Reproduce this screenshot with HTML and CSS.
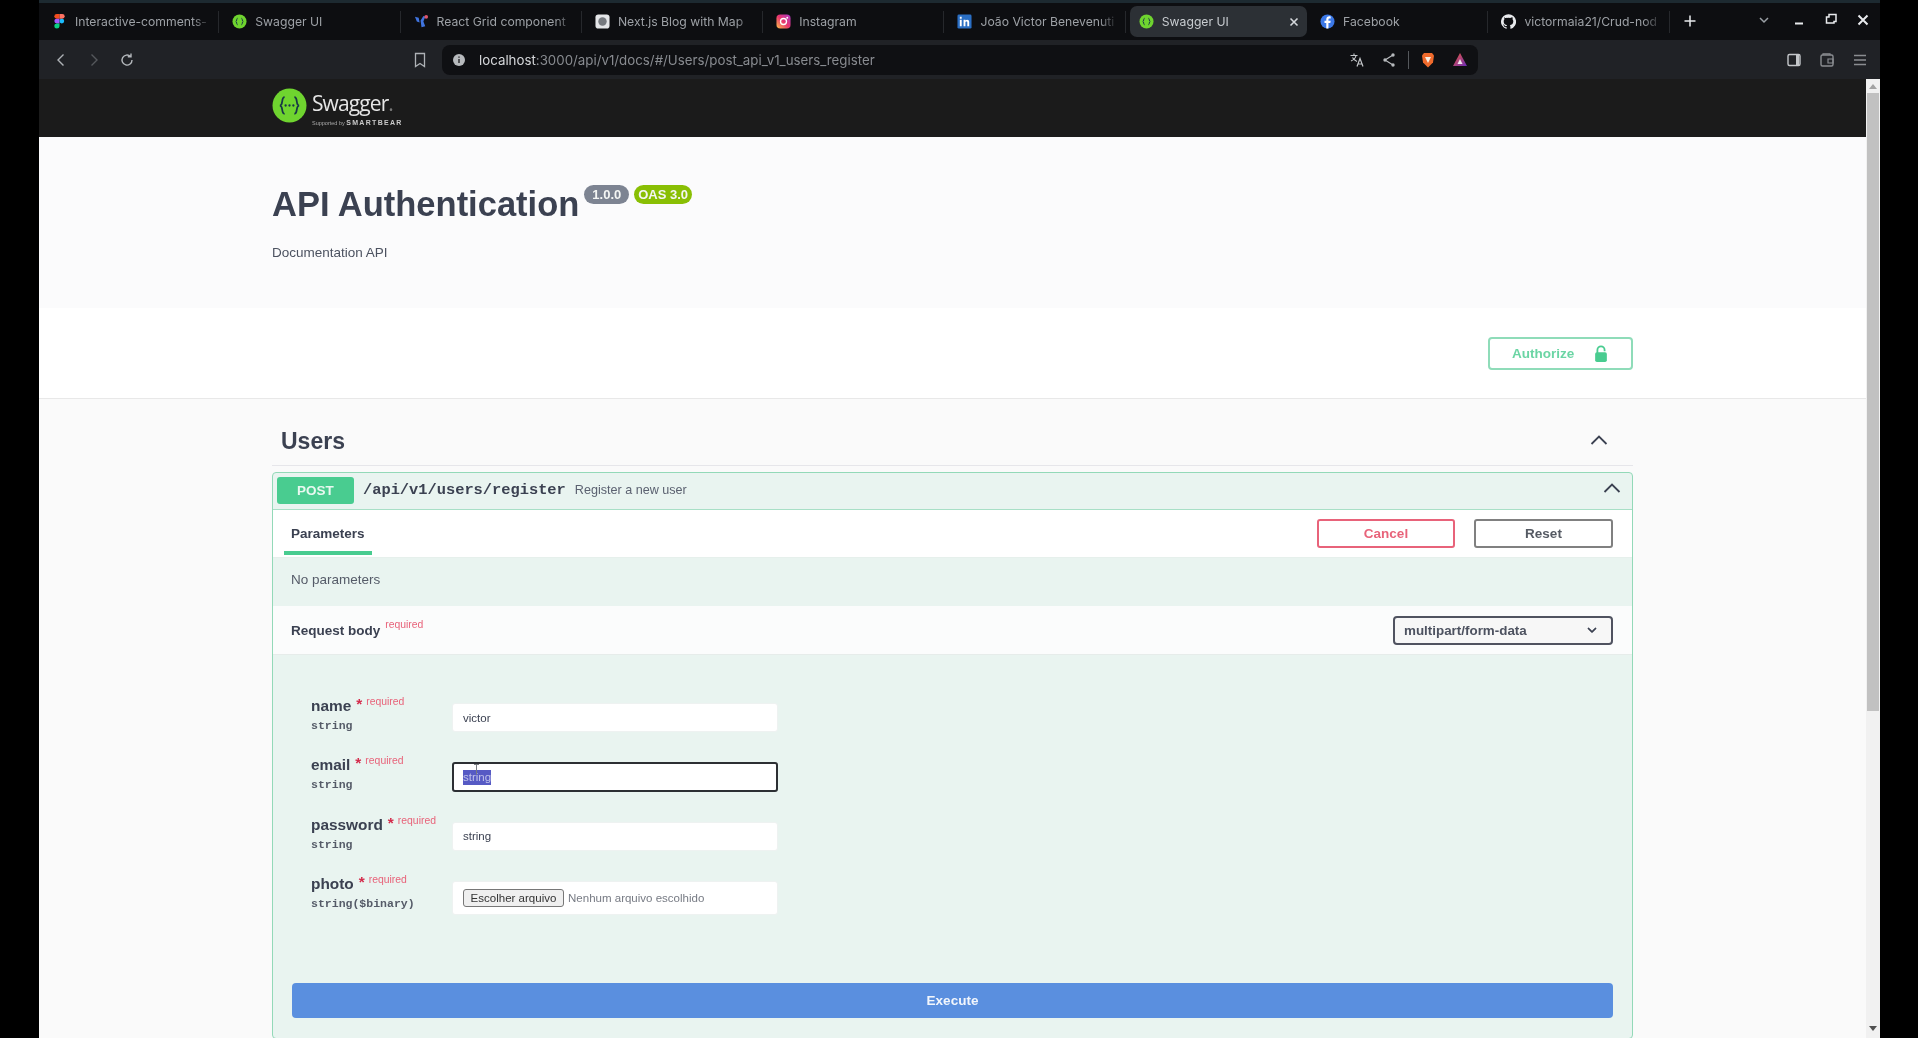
FILE: index.html
```html
<!DOCTYPE html>
<html>
<head>
<meta charset="utf-8">
<title>Swagger UI</title>
<link rel="stylesheet" href="styles.css">
</head>
<body>
<div class="window">

  <div class="tabbar">
    <div class="tab">
      <svg class="fav" viewBox="0 0 16 16"><path fill="#f24e1e" d="M5 0h3v5H5a2.5 2.5 0 0 1 0-5z"/><path fill="#ff7262" d="M8 0h3a2.5 2.5 0 0 1 0 5H8z"/><path fill="#a259ff" d="M5 5h3v5H5a2.5 2.5 0 0 1 0-5z"/><circle fill="#1abcfe" cx="10.5" cy="7.5" r="2.5"/><path fill="#0acf83" d="M5 10h3v3a2.8 2.8 0 1 1-3-3z"/></svg>
      <span class="title">Interactive-comments-</span>
    </div>
    <div class="tab">
      <svg class="fav" viewBox="0 0 16 16"><circle cx="8" cy="8" r="7.5" fill="#6fd42f"/><path d="M6 4.500C4.500 4.500 5.500 8 4 8c1.500 0 .5 3.500 2 3.500M10 4.500C11.500 4.500 10.500 8 12 8c-1.500 0-.5 3.500-2 3.500" fill="none" stroke="#173647" stroke-width="1"/></svg>
      <span class="title">Swagger UI</span>
    </div>
    <div class="tab">
      <svg class="fav" viewBox="0 0 16 16"><path d="M1 3l4 1 1 5-3-1zM7 7l3-5 2 1-2 5 2 5-4 1z" fill="#3f74e0"/><circle cx="13" cy="3" r="2" fill="#e0556b"/></svg>
      <span class="title">React Grid component</span>
    </div>
    <div class="tab">
      <svg class="fav" viewBox="0 0 16 16"><rect x=".5" y=".5" width="15" height="15" rx="3" fill="#e4e6e8"/><circle cx="8" cy="8" r="4.500" fill="#75797e"/></svg>
      <span class="title">Next.js Blog with Map</span>
    </div>
    <div class="tab">
      <svg class="fav" viewBox="0 0 16 16"><defs><linearGradient id="ig" x1="0" y1="1" x2="1" y2="0"><stop offset="0" stop-color="#fdc14a"/><stop offset=".5" stop-color="#e8336d"/><stop offset="1" stop-color="#a83cc8"/></linearGradient></defs><rect x=".5" y=".5" width="15" height="15" rx="4" fill="url(#ig)"/><circle cx="8" cy="8" r="3.200" fill="none" stroke="#fff" stroke-width="1.400"/><circle cx="12" cy="4" r="1" fill="#fff"/></svg>
      <span class="title">Instagram</span>
    </div>
    <div class="tab">
      <svg class="fav" viewBox="0 0 16 16"><rect x=".5" y=".5" width="15" height="15" rx="1.500" fill="#2a6fc4"/><path d="M3 6h2v7H3zM3 3h2v2H3zM7 6h2v1c1-1.500 4-1.500 4 1.500V13h-2V9c0-1.500-2-1.500-2 0v4H7z" fill="#fff"/></svg>
      <span class="title">João Victor Benevenuti</span>
    </div>
    <div class="tab active">
      <svg class="fav" viewBox="0 0 16 16"><circle cx="8" cy="8" r="7.500" fill="#6fd42f"/><path d="M6 4.500C4.500 4.500 5.500 8 4 8c1.500 0 .5 3.500 2 3.500M10 4.500C11.500 4.500 10.500 8 12 8c-1.500 0-.5 3.500-2 3.500" fill="none" stroke="#173647" stroke-width="1"/></svg>
      <span class="title">Swagger UI</span>
      <svg class="tab-close" viewBox="0 0 10 10"><path d="M1.500 1.500l7 7M8.500 1.500l-7 7" stroke="#d5d8dc" stroke-width="1.600"/></svg>
    </div>
    <div class="tab">
      <svg class="fav" viewBox="0 0 16 16"><circle cx="8" cy="8" r="7.500" fill="#3b78e7"/><path d="M9 15.500V9.500h2l.4-2.300H9V6c0-.8.3-1.200 1.200-1.200h1.200V2.700C9 2 6.700 2.800 6.700 5.600v1.600H4.800v2.300h1.900v6z" fill="#fff"/></svg>
      <span class="title">Facebook</span>
    </div>
    <div class="tab">
      <svg class="fav" viewBox="0 0 16 16"><path fill="#e8eaed" fill-rule="evenodd" d="M8 .2a8 8 0 0 0-2.500 15.600c.4.100.5-.2.5-.4v-1.400c-2.200.5-2.700-1-2.700-1-.4-.9-.9-1.200-.9-1.200-.7-.5.100-.5.100-.5.800.100 1.200.8 1.200.8.700 1.200 1.900.9 2.300.7.100-.5.300-.9.500-1.100-1.800-.2-3.600-.9-3.600-4 0-.9.300-1.600.8-2.100-.1-.2-.4-1 .1-2.100 0 0 .7-.2 2.200.8a7.600 7.600 0 0 1 4 0c1.500-1 2.200-.8 2.200-.8.400 1.100.2 1.900.1 2.100.5.600.8 1.300.8 2.100 0 3.100-1.900 3.800-3.700 4 .3.300.6.800.6 1.500v2.200c0 .2.100.5.600.4A8 8 0 0 0 8 .2z"/></svg>
      <span class="title">victormaia21/Crud-nod</span>
    </div>
    <svg class="ico new-tab" viewBox="0 0 14 14"><path d="M7 1.500v11M1.500 7h11" stroke="#e8eaed" stroke-width="1.500"/></svg>
    <div class="win-controls">
      <svg class="ico tab-list" viewBox="0 0 14 14"><path d="M3 5l4 4 4-4" fill="none" stroke="#9aa0a6" stroke-width="1.500"/></svg>
      <svg class="ico" viewBox="0 0 14 14"><path d="M3 10.500h8" stroke="#e8eaed" stroke-width="2"/></svg>
      <svg class="ico" viewBox="0 0 14 14"><path d="M5 1.500h7v7H10V10H2.500V4H5z" fill="none" stroke="#e8eaed" stroke-width="1.500"/></svg>
      <svg class="ico" viewBox="0 0 14 14"><path d="M2.500 2.500l9 9M11.500 2.500l-9 9" stroke="#e8eaed" stroke-width="2"/></svg>
    </div>
  </div>

  <div class="toolbar">
    <div class="nav-btns">
      <svg class="ico" viewBox="0 0 16 16"><path d="M10.500 2.500L5 8l5.500 5.500" fill="none" stroke="#aeb2b6" stroke-width="1.400"/></svg>
      <svg class="ico" viewBox="0 0 16 16"><path d="M5.500 2.500L11 8l-5.500 5.500" fill="none" stroke="#55585c" stroke-width="1.400"/></svg>
      <svg class="ico" viewBox="0 0 16 16"><path d="M13 8a5 5 0 1 1-1.500-3.500M12 1.500v3.200H8.800" fill="none" stroke="#b4b8bc" stroke-width="1.400"/></svg>
    </div>
    <svg class="ico bookmark" viewBox="0 0 16 16"><path d="M3.500 1.500h9v13L8 11.500l-4.500 3z" fill="none" stroke="#aeb2b6" stroke-width="1.300"/></svg>
    <div class="addressbar">
      <svg class="ico" viewBox="0 0 14 14"><circle cx="7" cy="7" r="6" fill="#b7babd"/><path d="M7 6v4M7 3.500v1.300" stroke="#1a1b1e" stroke-width="1.300"/></svg>
      <span class="url"><b>localhost</b>:3000/api/v1/docs/#/Users/post_api_v1_users_register</span>
      <div class="addr-icons">
        <svg class="ico" viewBox="0 0 16 16"><path d="M1.500 3.500h7M5 1.500v2M7 3.500C6.500 6 4.500 8 2 9M3.500 5.500C4.500 7.500 6 8.500 8 9.500" fill="none" stroke="#c4c7ca" stroke-width="1.100"/><path d="M8 14.500l3-8 3 8M9 12h4" fill="none" stroke="#c4c7ca" stroke-width="1.200"/></svg>
        <svg class="ico" viewBox="0 0 16 16"><path d="M12 3L4 8l8 5" fill="none" stroke="#b7babd" stroke-width="1.200"/><circle cx="12" cy="3" r="1.700" fill="#b7babd"/><circle cx="4" cy="8" r="1.700" fill="#b7babd"/><circle cx="12" cy="13" r="1.700" fill="#b7babd"/></svg>
        <span class="addr-sep"></span>
        <svg class="ico" viewBox="0 0 16 16"><path d="M4 1h8l2 2.500-1 7L8 15.500 3 10.500l-1-7z" fill="#ef6a2c"/><path d="M5 5h6L8 11z" fill="#f6efe6"/></svg>
        <svg class="ico" viewBox="0 0 16 16"><defs><linearGradient id="bat" x1="0" y1="0" x2="1" y2="1"><stop offset="0" stop-color="#ef5a3c"/><stop offset="1" stop-color="#6a2bb8"/></linearGradient></defs><path d="M8 1l7 13H1z" fill="url(#bat)"/><path d="M8 7l2.500 5h-5z" fill="#f1e6ee"/></svg>
      </div>
    </div>
    <div class="tool-icons">
      <svg class="ico" viewBox="0 0 16 16"><rect x="2" y="2.500" width="12" height="11" rx="1.500" fill="none" stroke="#c4c7ca" stroke-width="1.400"/><path d="M10 2.500h3v11h-3z" fill="#c4c7ca"/></svg>
      <svg class="ico" viewBox="0 0 16 16"><rect x="2" y="3" width="12" height="11" rx="1.500" fill="none" stroke="#8a8d91" stroke-width="1.400"/><path d="M4 3V1.800h7V3M9 7h5v4H9z" fill="none" stroke="#8a8d91" stroke-width="1.200"/></svg>
      <svg class="ico" viewBox="0 0 16 16"><path d="M2 3.500h12M2 8h12M2 12.500h12" stroke="#8a8d91" stroke-width="1.400"/></svg>
    </div>
  </div>

  <div class="viewport">
    <div class="page">

      <div class="topbar">
        <div class="wrap logo">
          <svg class="logo-mark" viewBox="0 0 36 36">
            <circle cx="18" cy="18" r="17.500" fill="#6fd42f"/>
            <path d="M13 9.500c-4 0-1 8.500-5 8.500 4 0 1 8.500 5 8.500M23 9.500c4 0 1 8.500 5 8.500-4 0-1 8.500-5 8.500" fill="none" stroke="#173647" stroke-width="1.800"/>
            <circle cx="14" cy="18" r="1.200" fill="#173647"/><circle cx="18" cy="18" r="1.200" fill="#173647"/><circle cx="22" cy="18" r="1.200" fill="#173647"/>
          </svg>
          <div class="logo-text">
            <span class="logo-name">Swagger<i>.</i></span>
            <span class="logo-sub">Supported by <b>SMARTBEAR</b></span>
          </div>
        </div>
      </div>

      <section class="info">
        <div class="wrap">
          <div class="info-head">
            <h2>API Authentication</h2>
            <span class="badge grey">1.0.0</span>
            <span class="badge green">OAS 3.0</span>
          </div>
          <p>Documentation API</p>
        </div>
      </section>

      <section class="schemes">
        <div class="wrap schemes-inner">
          <button class="authorize">
            <span>Authorize</span>
            <svg viewBox="0 0 20 20"><path d="M6 9V5.500a4 4 0 0 1 8 0V7" fill="none" stroke="#49cc90" stroke-width="2"/><rect x="3.500" y="8" width="13" height="11" rx="2" fill="#49cc90"/></svg>
          </button>
        </div>
      </section>

      <div class="wrap">
        <div class="tag-head">
          <h3>Users</h3>
          <svg class="chevron" viewBox="0 0 20 20"><path d="M2.500 14L10 6.500 17.500 14" fill="none" stroke="#3b4151" stroke-width="1.800"/></svg>
        </div>

        <div class="opblock">
          <div class="op-summary">
            <span class="method">POST</span>
            <span class="op-path">/api/v1/users/register</span>
            <span class="op-desc">Register a new user</span>
            <svg class="chevron" viewBox="0 0 20 20"><path d="M2.500 14L10 6.500 17.500 14" fill="none" stroke="#3b4151" stroke-width="1.800"/></svg>
          </div>

          <div class="op-tabs">
            <span class="tab-param">Parameters</span>
            <div class="op-actions">
              <button class="btn cancel">Cancel</button>
              <button class="btn">Reset</button>
            </div>
          </div>
          <div class="no-params">No parameters</div>

          <div class="body-head">
            <span class="body-title">Request body</span><sup class="req">required</sup>
            <div class="select">
              <span>multipart/form-data</span>
              <svg viewBox="0 0 20 20"><path d="M13.418 7.859a.695.695 0 0 1 .978 0 .68.68 0 0 1 0 .969l-3.908 3.830a.697.697 0 0 1-.979 0l-3.908-3.830a.68.68 0 0 1 0-.969.695.695 0 0 1 .978 0L10 11z" fill="#3b4151" stroke="#3b4151" stroke-width=".6"/></svg>
            </div>
          </div>

          <div class="body-form">
            <div class="param-row">
              <div class="param-label">
                <div class="param-name">name<em>*</em><small>required</small></div>
                <div class="param-type">string</div>
              </div>
              <input class="field" type="text" value="victor">
            </div>
            <div class="param-row">
              <div class="param-label">
                <div class="param-name">email<em>*</em><small>required</small></div>
                <div class="param-type">string</div>
              </div>
              <div class="field focused">
                <span class="selected">string</span>
                <svg class="ibeam" viewBox="0 0 7 11"><path d="M1 .5h5M3.500.5v10" stroke="#777b80" stroke-width="1"/></svg>
              </div>
            </div>
            <div class="param-row">
              <div class="param-label">
                <div class="param-name">password<em>*</em><small>required</small></div>
                <div class="param-type">string</div>
              </div>
              <input class="field" type="text" value="string">
            </div>
            <div class="param-row">
              <div class="param-label">
                <div class="param-name">photo<em>*</em><small>required</small></div>
                <div class="param-type">string($binary)</div>
              </div>
              <div class="field file">
                <button class="file-btn">Escolher arquivo</button>
                <span>Nenhum arquivo escolhido</span>
              </div>
            </div>
          </div>

          <div class="execute-wrap">
            <button class="execute">Execute</button>
          </div>
        </div>
      </div>

    </div>

    <div class="scrollbar">
      <span class="arrow up"></span>
      <div class="thumb"></div>
      <span class="arrow down"></span>
    </div>
  </div>

</div>
</body>
</html>
```

FILE: styles.css
```css
* { box-sizing: border-box; }
html, body { margin: 0; height: 100%; overflow: hidden; }
body {
  background: #000;
  padding-left: 39px;
  font-family: "Liberation Sans", Arial, sans-serif;
  color: #3b4151;
}
svg { display: block; flex: none; }
button { font-family: inherit; cursor: pointer; }

.window {
  width: 1841px;
  height: 1038px;
  display: flex;
  flex-direction: column;
  background: #fafafa;
  filter: blur(.4px);
}

/* browser chrome */
.tabbar {
  height: 40px;
  flex: none;
  display: flex;
  align-items: flex-start;
  background: #0d0e11;
  border-top: 3px solid #1d2a31;
  padding-top: 3px;
  font-family: Inter, "Liberation Sans", sans-serif;
  font-size: 12.200px;
  color: #9da1a6;
}
.tab {
  width: 181.300px;
  height: 31px;
  flex: none;
  display: flex;
  align-items: center;
  gap: 8px;
  padding: 0 6px 0 13px;
  background: linear-gradient(#26282c, #26282c) right center / 1px 22px no-repeat;
}
.tab:first-child { width: 180.300px; }
.tab.active {
  width: 177.300px;
  margin-left: 4px;
  padding-left: 9px;
  background: #2c3035;
  border-radius: 7px;
  color: #c8ccd0;
}
.fav { width: 15px; height: 15px; }
.title {
  flex: 1;
  min-width: 0;
  white-space: nowrap;
  overflow: hidden;
  -webkit-mask-image: linear-gradient(to right, #000 85%, transparent 99%);
  mask-image: linear-gradient(to right, #000 85%, transparent 99%);
}
.tab-close { width: 10px; height: 10px; margin-right: 2px; }
.ico { width: 16px; height: 16px; }
.new-tab { width: 14px; height: 14px; margin: 8px 0 0 13px; }
.win-controls {
  margin-left: auto;
  display: flex;
  align-items: center;
  gap: 18px;
  padding: 7px 10px 0 0;
}
.win-controls .ico { width: 14px; height: 14px; }
.win-controls .tab-list { margin-right: 3px; }

.toolbar {
  height: 39px;
  flex: none;
  display: flex;
  align-items: center;
  background: #202226;
}
.nav-btns { display: flex; gap: 17px; padding-left: 14px; }
.bookmark { margin-left: 277px; }
.addressbar {
  width: 1036px;
  height: 30px;
  margin-left: 14px;
  padding: 0 10px 0 10px;
  border-radius: 8px;
  background: #0f1013;
  display: flex;
  align-items: center;
  font-family: Inter, "Liberation Sans", sans-serif;
  font-size: 13.300px;
  color: #888b90;
}
.addressbar > .ico { width: 14px; height: 14px; }
.url { margin-left: 13px; }
.url b { font-weight: 400; color: #d5d7da; }
.addr-icons { margin-left: auto; display: flex; align-items: center; gap: 16px; }
.addr-sep { width: 1px; height: 18px; background: #55585c; margin: 0 -5px; }
.tool-icons { margin-left: auto; display: flex; gap: 17px; padding-right: 12px; }

/* page */
.viewport { flex: 1; min-height: 0; display: flex; }
.page { flex: 1; min-width: 0; overflow: hidden; background: #fafafa; }
.wrap { width: 1361px; margin: 0 auto; }

.topbar {
  height: 58px;
  background: #1b1b1b;
  display: flex;
  align-items: center;
}
.logo { display: flex; align-items: center; gap: 5px; padding-bottom: 5px; }
.logo-mark { width: 35px; height: 35px; }
.logo-text { display: flex; flex-direction: column; margin-top: 6px; }
.logo-name {
  font-family: "Open Sans", "Liberation Sans", sans-serif;
  font-size: 21px;
  line-height: 26px;
  letter-spacing: -.9px;
  color: #e6e6e6;
}
.logo-name i { font-style: normal; color: #777; }
.logo-sub {
  font-size: 5.500px;
  line-height: 7px;
  margin-top: 3px;
  color: #aaa;
}
.logo-sub b { font-size: 7px; letter-spacing: 1.300px; color: #c9c9c9; }

.info { height: 171px; background: #fbfbfc; padding-top: 47px; }
.info-head { display: flex; align-items: flex-start; }
.info h2 {
  margin: 0;
  font-size: 34.500px;
  line-height: 41px;
  font-weight: 700;
  color: #3b4151;
}
.badge {
  height: 19px;
  margin: 1px 0 0 5px;
  padding: 0 8px;
  border-radius: 10px;
  font-size: 13px;
  line-height: 19px;
  font-weight: 700;
  color: #f4f6f4;
}
.badge.grey { background: #7d8492; }
.badge.green { background: #89bf04; padding: 0 4px; }
.info p { margin: 19px 0 0; font-size: 13.500px; line-height: 18px; color: #4c5260; }

.schemes {
  height: 91px;
  background: #fff;
  border-bottom: 1px solid #e8e8e8;
  padding-top: 29px;
}
.schemes-inner { display: flex; justify-content: flex-end; }
.authorize {
  width: 145px;
  height: 33px;
  display: flex;
  align-items: center;
  justify-content: space-between;
  padding: 0 21px 0 22px;
  background: #fff;
  border: 2px solid #8fdcb9;
  border-radius: 4px;
  font-size: 13.500px;
  font-weight: 700;
  color: #6bd5a4;
}
.authorize svg { width: 18px; height: 18px; }

.tag-head {
  height: 67px;
  padding: 18px 24px 0 9px;
  border-bottom: 1px solid #e6e6ea;
  display: flex;
  align-items: center;
  justify-content: space-between;
}
.tag-head h3 { margin: 0; font-size: 23px; font-weight: 700; color: #3b4151; }
.tag-head .chevron { margin-top: -3px; }
.chevron { width: 20px; height: 20px; }

.opblock {
  margin-top: 6px;
  background: #e9f4f0;
  border: 1px solid #93d9b8;
  border-radius: 4px;
}
.op-summary {
  height: 37px;
  padding: 4px 10px 0 4px;
  display: flex;
  align-items: flex-start;
  border-bottom: 1px solid #a8dfc6;
}
.method {
  width: 77px;
  height: 27px;
  background: #49cc90;
  border-radius: 3px;
  color: #e9f8f0;
  font-size: 13.500px;
  font-weight: 700;
  line-height: 27px;
  text-align: center;
}
.op-path {
  margin-left: 9px;
  font-family: "Liberation Mono", monospace;
  font-size: 15.360px;
  font-weight: 700;
  line-height: 26px;
  color: #3b4151;
}
.op-desc { margin-left: 9px; font-size: 12.600px; line-height: 27px; color: #5b6170; }
.op-summary .chevron { margin: 1px 0 0 auto; }

.op-tabs {
  height: 48px;
  background: #fff;
  padding: 9px 19px 0 11px;
  display: flex;
  align-items: flex-start;
  justify-content: space-between;
  border-bottom: 1px solid #e6f0ec;
}
.tab-param {
  width: 88px;
  height: 36px;
  padding: 7px 0 0 7px;
  border-bottom: 4px solid #49cc90;
  font-size: 13.500px;
  font-weight: 700;
  white-space: nowrap;
}
.op-actions { display: flex; gap: 19px; }
.btn {
  width: 139px;
  height: 29px;
  background: #fff;
  border: 2px solid #808080;
  border-radius: 3px;
  font-size: 13.500px;
  font-weight: 700;
  color: #555a63;
}
.btn.cancel { width: 138px; border-color: #e8637a; color: #e8637a; }

.no-params {
  height: 48px;
  padding: 14px 18px 0;
  font-size: 13.500px;
  color: #555b68;
}

.body-head {
  height: 49px;
  background: #fbfcfc;
  border-bottom: 1px solid #e6ecea;
  padding: 0 19px 0 18px;
  display: flex;
  align-items: center;
}
.body-title { font-size: 13.500px; font-weight: 700; }
.req { margin: -12px 0 0 5px; font-size: 10.400px; color: #e8637a; }
.select {
  width: 220px;
  height: 29px;
  margin-left: auto;
  padding: 0 10px 0 9px;
  background: #f7f7f7;
  border: 2px solid #505360;
  border-radius: 4px;
  display: flex;
  align-items: center;
  justify-content: space-between;
  font-size: 13.400px;
  font-weight: 700;
  color: #4d5260;
}
.select svg { width: 18px; height: 18px; }

.body-form { padding: 41px 0 0 38px; }
.param-row { height: 59.330px; display: flex; align-items: flex-start; }
.param-label { width: 141px; flex: none; }
.param-name {
  display: flex;
  align-items: flex-start;
  font-size: 15.400px;
  line-height: 20px;
  font-weight: 700;
  color: #3b4151;
}
.param-name em {
  margin-left: 5px;
  font-size: 15.400px;
  line-height: 15px;
  font-style: normal;
  color: #d42c4c;
}
.param-name small {
  margin-left: 4px;
  font-size: 10.400px;
  line-height: 12px;
  font-weight: 400;
  color: #e8637a;
}
.param-type {
  margin-top: 1px;
  font-family: "Liberation Mono", monospace;
  font-size: 11.520px;
  line-height: 18px;
  font-weight: 700;
  color: #555b68;
}
.field {
  position: relative;
  width: 326px;
  height: 29px;
  margin-top: 7px;
  padding: 0 10px;
  background: #fff;
  border: 1px solid #eef2f1;
  border-radius: 3px;
  font-family: inherit;
  font-size: 11.520px;
  color: #3b4151;
  display: flex;
  align-items: center;
}
.field.focused { height: 30px; border: 2px solid #2c2f33; padding: 0 9px; }
.selected { background: #565ac4; color: #c0c2ea; line-height: 15px; }
.ibeam { position: absolute; left: 19px; top: 0; width: 7px; height: 11px; }
.field.file { height: 34px; gap: 4px; color: #777b84; }
.file-btn {
  width: 101px;
  height: 18px;
  padding: 0;
  background: #efefef;
  border: 1px solid #777;
  border-radius: 3px;
  font-size: 11.520px;
  color: #333;
}

.execute-wrap { padding: 50px 19px 20px 19px; }
.execute {
  width: 100%;
  height: 35px;
  border: 0;
  border-radius: 4px;
  background: #5a8fdf;
  color: #f2f6fc;
  font-size: 13.500px;
  font-weight: 700;
}

.scrollbar {
  width: 14px;
  flex: none;
  background: #f1f1f1;
  display: flex;
  flex-direction: column;
  align-items: center;
  padding-top: 5px;
}
.arrow { width: 0; height: 0; border: 4px solid transparent; }
.arrow.up { border-bottom: 5px solid #a3a3a3; border-top: 0; }
.arrow.down { border-top: 5px solid #505050; border-bottom: 0; margin: auto 0 7px; }
.thumb { width: 12px; height: 618px; margin-top: 4px; background: #c1c1c1; }
```
